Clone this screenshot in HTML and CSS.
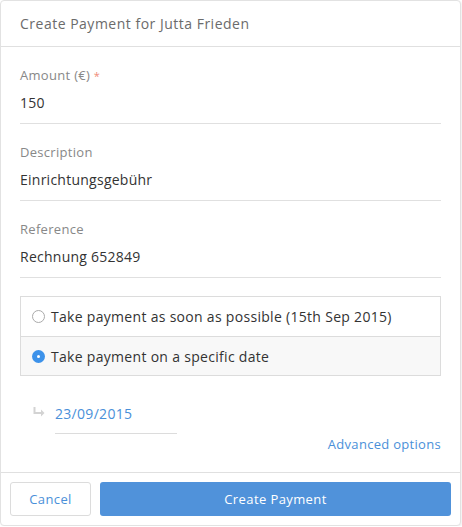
FILE: index.html
```html
<!DOCTYPE html>
<html>
<head>
<meta charset="utf-8">
<link rel="stylesheet" href="styles.css">
</head>
<body>
<div class="card">
  <div class="card-header">Create Payment for Jutta Frieden</div>
  <div class="card-body">
    <div class="field">
      <div class="label">Amount (€) <span class="req">*</span></div>
      <div class="value">150</div>
    </div>
    <div class="field">
      <div class="label">Description</div>
      <div class="value">Einrichtungsgebühr</div>
    </div>
    <div class="field">
      <div class="label">Reference</div>
      <div class="value">Rechnung 652849</div>
    </div>
    <div class="options">
      <div class="option">
        <span class="radio"></span>
        <span>Take payment as soon as possible (15th Sep 2015)</span>
      </div>
      <div class="option selected">
        <span class="radio checked"></span>
        <span>Take payment on a specific date</span>
      </div>
    </div>
    <div class="date-row">
      <svg class="arrow" width="12" height="10" viewBox="0 0 12 10">
        <path d="M1.5 0 V6 H9" fill="none" stroke="#d3d3d3" stroke-width="2"/>
        <path d="M8 2.5 L11.5 6 L8 9.5 Z" fill="#d3d3d3"/>
      </svg>
      <div class="date">23/09/2015</div>
    </div>
    <div class="advanced"><a>Advanced options</a></div>
  </div>
  <div class="card-footer">
    <button class="btn btn-cancel">Cancel</button>
    <button class="btn btn-primary">Create Payment</button>
  </div>
</div>
</body>
</html>
```
FILE: styles.css
```css
* { box-sizing: border-box; }
body {
  margin: 0;
  background: #fff;
  font-family: "Open Sans", sans-serif;
  -webkit-font-smoothing: antialiased;
}
.card {
  width: 461px;
  height: 526px;
  border: 1px solid #e2e2e2;
  border-radius: 4px;
  box-shadow: 1px 1px 2px rgba(0,0,0,0.06);
  display: flex;
  flex-direction: column;
  background: #fff;
}
.card-header {
  height: 46px;
  border-bottom: 1px solid #e0e0e0;
  padding: 0 19px;
  display: flex;
  align-items: center;
  font-size: 14px;
  color: #6b6b6b;
  letter-spacing: 0.5px;
}
.card-body {
  flex: 1;
  padding: 0 19px;
}
.field {
  padding-top: 18px;
  padding-bottom: 10px;
  border-bottom: 1px solid #e0e0e0;
}
.label {
  height: 20px;
  line-height: 20px;
  font-size: 13px;
  color: #888;
  letter-spacing: 0.3px;
}
.req { color: #f08a78; font-size: 11px; }
.value {
  margin-top: 8px;
  height: 20px;
  line-height: 20px;
  font-size: 14px;
  color: #333;
  letter-spacing: 0.25px;
}
.options {
  margin-top: 18px;
  border: 1px solid #dcdcdc;
}
.option {
  height: 39px;
  display: flex;
  align-items: center;
  padding-left: 11px;
  font-size: 14px;
  color: #333;
  letter-spacing: 0.3px;
}
.option + .option { border-top: 1px solid #dcdcdc; }
.option.selected { background: #f8f8f8; }
.radio {
  width: 13px;
  height: 13px;
  border-radius: 50%;
  border: 1px solid #aaa;
  background: #fff;
  margin-right: 6px;
  flex: none;
}
.radio.checked {
  border: none;
  background: #3d92ea;
  position: relative;
}
.radio.checked::after {
  content: "";
  position: absolute;
  left: 5px; top: 5px;
  width: 3px; height: 3px;
  border-radius: 50%;
  background: #fff;
}
.date-row {
  margin-top: 28px;
  display: flex;
  align-items: flex-start;
  padding-left: 13px;
}
.arrow { margin-top: 3px; margin-right: 10px; }
.date {
  width: 122px;
  height: 30px;
  line-height: 20px;
  font-size: 14px;
  color: #4a90d9;
  border-bottom: 1px solid #dcdcdc;
  letter-spacing: 0.3px;
}
.advanced {
  text-align: right;
  font-size: 13px;
  color: #4a90d9;
  margin-top: 0;
  line-height: 20px;
  letter-spacing: 0.3px;
}
.card-footer {
  height: 53px;
  border-top: 1px solid #e0e0e0;
  padding: 9px 9px 9px 9px;
  display: flex;
  gap: 9px;
}
.btn {
  height: 34px;
  border-radius: 3px;
  font-family: "Open Sans", sans-serif;
  font-size: 13px;
  letter-spacing: 0.4px;
  cursor: pointer;
}
.btn-cancel {
  width: 81px;
  background: #fff;
  border: 1px solid #dcdcdc;
  color: #4a90d9;
}
.btn-primary {
  flex: 1;
  background: #5092da;
  border: none;
  color: #fff;
}
```
